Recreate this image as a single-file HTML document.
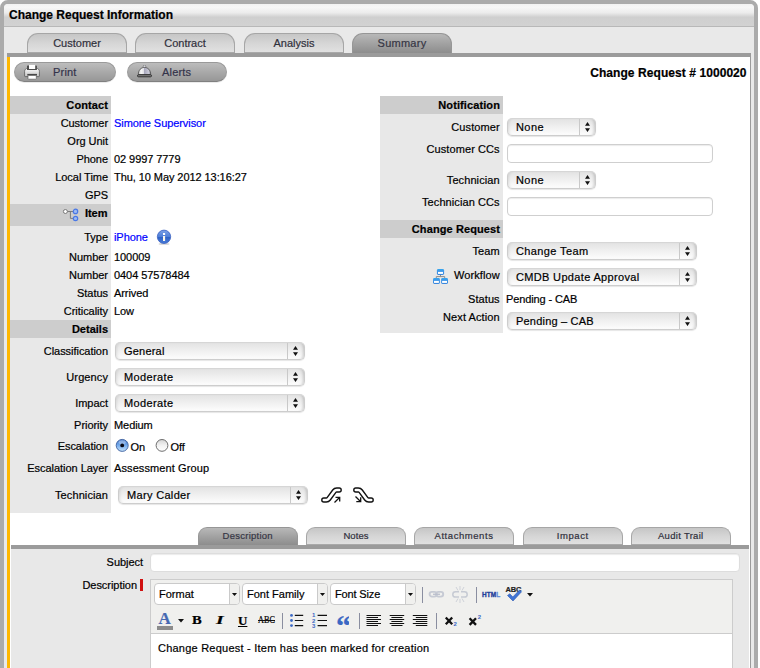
<!DOCTYPE html>
<html><head><meta charset="utf-8">
<style>
*{box-sizing:border-box;margin:0;padding:0}
html,body{width:760px;height:668px;overflow:hidden;background:#fff}
body{font-family:"Liberation Sans",sans-serif;font-size:11px;color:#000;position:relative;-webkit-text-stroke:.2px}
.abs{position:absolute}
#frame{position:absolute;left:0;top:0;width:758px;height:700px;border:4px solid #ababab;border-radius:8px 8px 0 0;background:#e9e9e9}
#hdr{position:absolute;left:4px;top:4px;width:750px;height:22px;background:linear-gradient(#f2f2f2 0%,#f7f7f7 15%,#ececec 40%,#dddddd 50%,#cfcfcf 60%,#d2d2d2 100%);border-radius:4px 4px 0 0}
#hdrline{position:absolute;left:4px;top:26px;width:750px;height:1px;background:#b8b8b8}
#title{position:absolute;left:9px;top:8px;font-weight:bold;font-size:12px;line-height:14px;color:#000}
.tab{position:absolute;height:20px;width:100px;border-radius:11px 11px 0 0;border:1px solid #a6a6a6;border-bottom:none;box-shadow:inset 0 -1px 0 #a9a9a9;background:linear-gradient(#c6c6c6,#d6d6d6 50%,#e2e2e2);text-align:center;font-size:11px;line-height:18px;color:#30303c;letter-spacing:0}
.tab.sel{background:linear-gradient(#b8b8b8,#a2a2a2 50%,#8d8d8d);color:#363644;border-color:#969696;box-shadow:none}
.tab.bt{top:527px;height:18px;width:99.500px;font-size:9.500px;line-height:16px;border-radius:9px 9px 0 0}
.bar{position:absolute;background:#9b9b9b}
#white{position:absolute;left:10px;top:57px;width:740px;height:620px;background:#fff}
#gp{position:absolute;left:11px;top:549px;width:738px;height:130px;background:#e8e8e8}
#yellow{position:absolute;left:7px;top:57px;width:3px;height:620px;background:#ffb700}
.btn{position:absolute;height:20px;width:101px;border-radius:10px;background:linear-gradient(#bdbdbd,#a9a9a9 50%,#979797);border:1px solid #9a9a9a;border-bottom-color:#808080;box-shadow:0 1px 0 rgba(0,0,0,.08);font-size:11px;line-height:18px;color:#33334a;letter-spacing:.2px}
.lblcol{position:absolute;background:#e8e8e8}
.sec{position:absolute;background:#cdcdcd;height:18px;font-weight:bold;text-align:right;line-height:18px;padding-right:3px}
.l{position:absolute;text-align:right;line-height:14px;white-space:nowrap;letter-spacing:-.04px}
.v{position:absolute;line-height:14px;white-space:nowrap;letter-spacing:-.07px}
.link{color:#0000ff}
.sel2{position:absolute;height:18px;border-radius:5px;border:1px solid #cdcdcd;border-top-color:#d6d6d6;background:linear-gradient(#e3e3e3,#f0f0f0 50%,#fdfdfd);box-shadow:inset -3px 0 3px -2px rgba(0,0,0,.18),inset 3px 0 3px -2px rgba(0,0,0,.10),0 1px 1px rgba(0,0,0,.10);font-size:11px;line-height:17px;padding-left:8px;letter-spacing:.2px;color:#000}
.sel2 i{position:absolute;right:15px;top:0;bottom:0;width:1px;background:#c9c9c9}
.sel2 svg{position:absolute;right:5px;top:3px}
.sel2[style*="--w"] i{right:16px}
.sel2[style*="--w"] svg{right:6px}
.sel2 b{position:absolute;right:4px;top:3px;width:7px;height:11px}
.inp{position:absolute;height:19px;border-radius:4px;border:1px solid #cfcfcf;background:#fff;box-shadow:inset 0 1px 1px rgba(0,0,0,.08)}
</style></head><body>
<div id="frame"></div>
<div id="hdr"></div><div id="hdrline"></div>
<div id="title">Change Request Information</div>

<div class="tab" style="left:27px;top:33px">Customer</div>
<div class="tab" style="left:135px;top:33px">Contract</div>
<div class="tab" style="left:244px;top:33px">Analysis</div>
<div class="tab sel" style="left:352px;top:33px;letter-spacing:.25px">Summary</div>
<div class="bar" style="left:7px;top:53px;width:744px;height:4px;box-shadow:0 1px 0 rgba(155,155,155,.45)"></div>
<div class="bar" style="left:750px;top:53px;width:1px;height:620px"></div>
<div id="white"></div><div id="gp"></div>
<div id="yellow"></div>

<div class="btn" style="left:14px;top:62px;width:101.500px"><svg class="abs" style="left:9px;top:1px" width="17" height="17" viewBox="0 0 17 17">
<defs><linearGradient id="pg" x1="0" y1="0" x2="0" y2="1"><stop offset="0" stop-color="#ffffff"/><stop offset=".35" stop-color="#e6e6e6"/><stop offset="1" stop-color="#c4c4c4"/></linearGradient></defs>
<path d="M.6 12V7.400C.6 5.600 1.900 4.600 3.200 4.300H12.800C14.100 4.600 15.400 5.600 15.400 7.400V12Q15.400 12.600 14.800 12.600H1.200Q.6 12.600 .6 12Z" fill="url(#pg)" stroke="#5a5a5a" stroke-width=".8"/>
<path d="M3 6V2.300Q3 1.600 3.700 1.600H12.200Q12.900 1.600 12.900 2.300V6Z" fill="#4c4c4c"/>
<rect x="5" y=".9" width="6.200" height="4.100" fill="#fff"/>
<rect x="3.300" y="9.900" width="9.700" height="1.700" fill="#484848"/>
<rect x="4" y="11.500" width="8.300" height="3.700" rx=".5" fill="#fff" stroke="#5e5e5e" stroke-width=".7"/>
</svg><span class="abs" style="left:38px;top:0">Print</span></div>
<div class="btn" style="left:127px;top:62px;width:100px"><svg class="abs" style="left:9px;top:2px" width="16" height="13" viewBox="0 0 16 13">
<defs><linearGradient id="bg" x1="0" y1="0" x2="1" y2="0"><stop offset="0" stop-color="#b8b8b8"/><stop offset=".22" stop-color="#f8f8f8"/><stop offset=".48" stop-color="#dcdce2"/><stop offset=".5" stop-color="#a9a9bd"/><stop offset=".85" stop-color="#c9c9d6"/><stop offset="1" stop-color="#8c8c98"/></linearGradient></defs>
<ellipse cx="7.500" cy="1.500" rx="1.250" ry="1.400" fill="#e4e4ea" stroke="#5a5a5a" stroke-width=".6"/>
<path d="M1.300 9.600C1.300 5 4.200 2.400 7.500 2.400S13.700 5 13.700 9.600Z" fill="url(#bg)" stroke="#4c4c4c" stroke-width=".8"/>
<rect x=".5" y="9.800" width="14" height="2" rx="1" fill="#8e8e8e" stroke="#222" stroke-width=".9"/>
</svg><span class="abs" style="left:34px;top:0">Alerts</span></div>
<div class="abs" style="right:13.400px;top:66px;font-weight:bold;font-size:12px;line-height:14px;letter-spacing:.07px">Change Request # 1000020</div>

<!-- left column -->
<div class="lblcol" style="left:10px;top:96px;width:101px;height:417px"></div>
<div class="sec" style="left:10px;top:96px;width:101px;letter-spacing:.1px">Contact</div>
<div class="sec" style="left:10px;top:204px;width:101px;height:22px;line-height:19px;padding-right:3.500px">Item</div>
<div class="sec" style="left:10px;top:320px;width:101px">Details</div>

<div class="l" style="right:652px;top:116px">Customer</div><div class="v link" style="left:114px;top:116px">Simone Supervisor</div>
<div class="l" style="right:652px;top:134px">Org Unit</div>
<div class="l" style="right:652px;top:152px">Phone</div><div class="v" style="left:114px;top:152px">02 9997 7779</div>
<div class="l" style="right:652px;top:170px">Local Time</div><div class="v" style="left:114px;top:170px">Thu, 10 May 2012 13:16:27</div>
<div class="l" style="right:652px;top:188px">GPS</div>
<div class="l" style="right:652px;top:230px">Type</div><div class="v link" style="left:114px;top:230px">iPhone</div>
<div class="l" style="right:652px;top:250px">Number</div><div class="v" style="left:114px;top:250px">100009</div>
<div class="l" style="right:652px;top:268px">Number</div><div class="v" style="left:114px;top:268px">0404 57578484</div>
<div class="l" style="right:652px;top:286px">Status</div><div class="v" style="left:114px;top:286px">Arrived</div>
<div class="l" style="right:652px;top:304px">Criticality</div><div class="v" style="left:114px;top:304px">Low</div>
<div class="l" style="right:652px;top:344px">Classification</div>
<div class="l" style="right:652px;top:370px;letter-spacing:.1px">Urgency</div>
<div class="l" style="right:652px;top:396px">Impact</div>
<div class="l" style="right:652px;top:418px">Priority</div><div class="v" style="left:114px;top:418px">Medium</div>
<div class="l" style="right:652px;top:439px">Escalation</div>
<div class="l" style="right:652px;top:461px">Escalation Layer</div><div class="v" style="left:114px;top:461px;letter-spacing:.1px">Assessment Group</div>
<div class="l" style="right:652px;top:488px;letter-spacing:.1px">Technician</div>

<div class="sel2" style="left:115px;top:342px;width:190px;--w:1">General<i></i><svg width="5" height="10" viewBox="0 0 5 10"><path d="M2.5 0L5 3.8H0zM2.5 10L5 6.2H0z" fill="#111"/></svg></div>
<div class="sel2" style="left:115px;top:368px;width:190px;--w:1;letter-spacing:.37px">Moderate<i></i><svg width="5" height="10" viewBox="0 0 5 10"><path d="M2.5 0L5 3.8H0zM2.5 10L5 6.2H0z" fill="#111"/></svg></div>
<div class="sel2" style="left:115px;top:394px;width:190px;--w:1;letter-spacing:.37px">Moderate<i></i><svg width="5" height="10" viewBox="0 0 5 10"><path d="M2.5 0L5 3.8H0zM2.5 10L5 6.2H0z" fill="#111"/></svg></div>
<div class="sel2" style="left:118px;top:486px;width:190px;--w:1;letter-spacing:.33px">Mary Calder<i></i><svg width="5" height="10" viewBox="0 0 5 10"><path d="M2.5 0L5 3.8H0zM2.5 10L5 6.2H0z" fill="#111"/></svg></div>


<svg class="abs" style="left:62px;top:208px" width="18" height="14" viewBox="0 0 18 14">
<path d="M5 3.500H11.500M8.400 3.500V10.400H11.500" fill="none" stroke="#7c7c7c" stroke-width="1"/>
<circle cx="3.400" cy="3.500" r="2" fill="#fff" stroke="#7a7a7a" stroke-width="1"/>
<circle cx="13.500" cy="3.400" r="2.200" fill="#9dbaf2" stroke="#4a78e6" stroke-width="1.200"/>
<circle cx="13.500" cy="10.500" r="2.200" fill="#9dbaf2" stroke="#4a78e6" stroke-width="1.200"/>
</svg>
<svg class="abs" style="left:156px;top:229px" width="16" height="17" viewBox="0 0 16 17">
<defs><linearGradient id="ig" x1="0" y1="0" x2="0" y2="1"><stop offset="0" stop-color="#7da2e6"/><stop offset=".48" stop-color="#4f7fd8"/><stop offset=".52" stop-color="#2f62c6"/><stop offset="1" stop-color="#4a7cd8"/></linearGradient></defs>
<ellipse cx="8" cy="14.900" rx="5.500" ry="1.200" fill="#000" opacity=".14"/>
<circle cx="8" cy="7.800" r="6.700" fill="url(#ig)" stroke="#2c55bc" stroke-width=".7"/>
<rect x="7" y="4" width="2.100" height="2" fill="#fff"/>
<rect x="7" y="7" width="2.100" height="5" fill="#fbf7ea"/>
</svg>

<svg class="abs" style="left:320px;top:486px" width="24" height="18" viewBox="0 0 24 18">
<path d="M3.800 14H6.300Q7.800 14 8.700 12.800L14.300 5.200Q15.200 4 16.700 4H19.200" fill="none" stroke="#111" stroke-width="5.400" stroke-linecap="round" stroke-linejoin="round"/>
<path d="M3.800 14H6.300Q7.800 14 8.700 12.800L14.300 5.200Q15.200 4 16.700 4H19.200" fill="none" stroke="#fff" stroke-width="2.600" stroke-linecap="round" stroke-linejoin="round"/>
<path d="M14.500 16.500L19.500 11.500M15.500 11.300H19.700V15.500" fill="none" stroke="#111" stroke-width="1.300"/>
</svg>
<svg class="abs" style="left:351px;top:486px" width="25" height="18" viewBox="0 0 25 18">
<path d="M4.800 4H7.300Q8.800 4 9.700 5.200L15.300 12.800Q16.200 14 17.700 14H20.200" fill="none" stroke="#111" stroke-width="5.400" stroke-linecap="round" stroke-linejoin="round"/>
<path d="M4.800 4H7.300Q8.800 4 9.700 5.200L15.300 12.800Q16.200 14 17.700 14H20.200" fill="none" stroke="#fff" stroke-width="2.600" stroke-linecap="round" stroke-linejoin="round"/>
<path d="M4.500 10.500L9.500 15.500M5.300 15.700H9.700V11.300" fill="none" stroke="#111" stroke-width="1.300"/>
</svg>
<svg class="abs" style="left:115px;top:438px" width="15" height="15" viewBox="0 0 15 15">
<defs><linearGradient id="rg" x1="0" y1="0" x2="0" y2="1"><stop offset="0" stop-color="#3a6fc4"/><stop offset=".45" stop-color="#6ea6ea"/><stop offset="1" stop-color="#c8e4fb"/></linearGradient></defs>
<circle cx="7.200" cy="7.400" r="6" fill="url(#rg)" stroke="#3b5f9e" stroke-width=".9"/>
<ellipse cx="7.200" cy="4.300" rx="3.600" ry="2" fill="#fff" opacity=".35"/>
<circle cx="7.200" cy="7.400" r="1.900" fill="#0a0a14"/>
</svg>
<svg class="abs" style="left:155px;top:438px" width="15" height="15" viewBox="0 0 15 15">
<defs><linearGradient id="rg2" x1="0" y1="0" x2="0" y2="1"><stop offset="0" stop-color="#d4d4d4"/><stop offset=".5" stop-color="#f2f2f2"/><stop offset="1" stop-color="#fff"/></linearGradient></defs>
<circle cx="7" cy="7.400" r="5.900" fill="url(#rg2)" stroke="#6e6e6e" stroke-width="1"/>
</svg>
<div class="v" style="left:130.500px;top:440px">On</div>
<div class="v" style="left:170.500px;top:440px">Off</div>

<!-- right column -->
<div class="lblcol" style="left:380px;top:96px;width:123px;height:237px"></div>
<div class="sec" style="left:380px;top:96px;width:123px;letter-spacing:.1px">Notification</div>
<div class="sec" style="left:380px;top:220px;width:123px;letter-spacing:.1px">Change Request</div>
<div class="l" style="letter-spacing:.09px;right:260.300px;top:120px">Customer</div>
<div class="l" style="letter-spacing:.09px;right:260.300px;top:142px">Customer CCs</div>
<div class="l" style="letter-spacing:.09px;right:260.300px;top:173px">Technician</div>
<div class="l" style="letter-spacing:.09px;right:260.300px;top:195px">Technician CCs</div>
<div class="l" style="letter-spacing:.09px;right:260.300px;top:244px">Team</div>
<div class="l" style="letter-spacing:.09px;right:260.300px;top:268px">Workflow</div>
<div class="l" style="letter-spacing:.09px;right:260.300px;top:292px">Status</div><div class="v" style="left:506px;top:292px;letter-spacing:-.12px">Pending - CAB</div>
<div class="l" style="letter-spacing:.09px;right:260.300px;top:310px">Next Action</div>
<div class="sel2" style="left:507px;top:118px;width:89px;letter-spacing:.42px">None<i></i><svg width="5" height="10" viewBox="0 0 5 10"><path d="M2.5 0L5 3.8H0zM2.5 10L5 6.2H0z" fill="#111"/></svg></div>
<div class="sel2" style="left:507px;top:171px;width:89px;letter-spacing:.42px">None<i></i><svg width="5" height="10" viewBox="0 0 5 10"><path d="M2.5 0L5 3.8H0zM2.5 10L5 6.2H0z" fill="#111"/></svg></div>
<div class="inp" style="left:507px;top:144px;width:206px"></div>
<div class="inp" style="left:507px;top:197px;width:206px"></div>
<div class="sel2" style="left:507px;top:242px;width:190px;--w:1;letter-spacing:.38px">Change Team<i></i><svg width="5" height="10" viewBox="0 0 5 10"><path d="M2.5 0L5 3.8H0zM2.5 10L5 6.2H0z" fill="#111"/></svg></div>
<div class="sel2" style="left:507px;top:268px;width:190px;--w:1;letter-spacing:.335px">CMDB Update Approval<i></i><svg width="5" height="10" viewBox="0 0 5 10"><path d="M2.5 0L5 3.8H0zM2.5 10L5 6.2H0z" fill="#111"/></svg></div>
<div class="sel2" style="left:507px;top:312px;width:190px;--w:1">Pending &#8211; CAB<i></i><svg width="5" height="10" viewBox="0 0 5 10"><path d="M2.5 0L5 3.8H0zM2.5 10L5 6.2H0z" fill="#111"/></svg></div>

<svg class="abs" style="left:432px;top:269px" width="17" height="16" viewBox="0 0 17 16">
<defs><linearGradient id="wg" x1="0" y1="0" x2="0" y2="1"><stop offset="0" stop-color="#35a6ee"/><stop offset=".3" stop-color="#3d98ea"/><stop offset="1" stop-color="#3c86dc"/></linearGradient></defs>
<path d="M8.500 6V7.600M4.300 9.200V7.600H12.700V9.200" fill="none" stroke="#8c8c8c" stroke-width="1"/>
<g fill="url(#wg)"><rect x="4.900" y=".1" width="7.200" height="5.900" rx="1.400"/><rect x="1" y="9.100" width="6.900" height="5.900" rx="1.400"/><rect x="9.100" y="9.100" width="6.900" height="5.900" rx="1.400"/></g>
<g fill="#fff"><rect x="6" y="2.900" width="5" height="2"/><rect x="2" y="11.900" width="4.900" height="2"/><rect x="10.100" y="11.900" width="4.900" height="2"/></g>
</svg>
<!-- bottom tabs -->
<div class="tab sel bt" style="left:198px;letter-spacing:.25px">Description</div>
<div class="tab bt" style="left:306px;width:100px;letter-spacing:.05px">Notes</div>
<div class="tab bt" style="left:414px;width:100px;letter-spacing:.56px">Attachments</div>
<div class="tab bt" style="left:523px;letter-spacing:.58px">Impact</div>
<div class="tab bt" style="left:631px;letter-spacing:.3px">Audit Trail</div>
<div class="bar" style="left:11px;top:545px;width:738px;height:4px"></div>

<div class="l" style="right:617px;top:555px">Subject</div>
<div class="inp" style="left:150px;top:553px;width:590px;border-color:#ddd"></div>
<div class="l" style="right:623px;top:578px">Description</div>
<div class="abs" style="left:140px;top:579px;width:3px;height:12px;background:#d01010"></div>

<div class="abs" id="ed" style="left:150px;top:579px;width:583px;height:100px;background:#f0f0ee;border:1px solid #ccc"></div>

<style>
.ms{position:absolute;top:583px;height:22px;width:86px;border:1px solid #cacaca;border-radius:4px;background:#fff;font-size:11px;line-height:20px;padding-left:4px;letter-spacing:0;overflow:hidden}
.ms u{position:absolute;right:0;top:0;bottom:0;width:10px;border-left:1px solid #cacaca;background:#f0f0ee}
.ms u:after{content:"";position:absolute;left:1.500px;top:8.500px;width:6px;height:3.500px;background:#111;clip-path:polygon(0 0,100% 0,50% 100%)}
.sep{position:absolute;width:1px;background:#8a8ea0}
.da{position:absolute;width:6px;height:3.500px;background:#111;clip-path:polygon(0 0,100% 0,50% 100%)}
.ser{position:absolute;font-family:"Liberation Serif",serif;color:#000;line-height:14px}
</style>
<div class="ms" style="left:154px">Format<u></u></div>
<div class="ms" style="left:242px">Font Family<u></u></div>
<div class="ms" style="left:330px;letter-spacing:-.15px">Font Size<u></u></div>
<div class="sep" style="left:422px;top:587px;height:16px"></div>
<svg class="abs" style="left:428px;top:589px" width="17" height="11" viewBox="0 0 17 11"><g fill="none" stroke="#c6cad4" stroke-width="1.900"><rect x="1.600" y="2.900" width="7" height="4.700" rx="2.350"/><rect x="8.200" y="2.900" width="7" height="4.700" rx="2.350"/></g><path d="M5 5.250H12" stroke="#b9becb" stroke-width="1.300"/></svg>
<svg class="abs" style="left:451px;top:585px" width="18" height="19" viewBox="0 0 18 19"><g fill="none" stroke="#c6cad3" stroke-width="1.500"><path d="M8 6.700H4.500a2.700 2.700 0 0 0 0 5.400H8M10 6.700H13.500a2.700 2.700 0 0 1 0 5.400H10"/></g><g stroke="#cfd2d9" stroke-width="1"><path d="M9 1V5M5 2L7 5.500M13 2L11 5.500M9 18V14M5 17L7 13.500M13 17L11 13.500"/></g></svg>
<div class="sep" style="left:476px;top:587px;height:16px"></div>
<div class="abs" style="left:481.500px;top:590px;font-size:7px;font-weight:bold;line-height:9px;color:#1f409a;-webkit-text-stroke:.35px #1f409a;letter-spacing:.1px;transform-origin:0 0;transform:scaleX(.92)">HTM<span style="color:#5f8ad8;-webkit-text-stroke:.35px #5f8ad8">L</span></div>
<div class="abs" style="left:505.500px;top:585.500px;font-size:7.500px;font-weight:bold;line-height:8px;color:#222;letter-spacing:-.2px">ABC</div>
<svg class="abs" style="left:506px;top:589px" width="17" height="13" viewBox="0 0 17 13"><path d="M1.500 6.500L3.800 4.800L6.800 8L13.500 1L15.500 2.800L7 12z" fill="#3f74d6" stroke="#2a55b0" stroke-width=".6"/></svg>
<div class="da" style="left:527px;top:593px"></div>

<div class="ser" style="left:158.600px;top:609.300px;font-size:17px;line-height:20px;color:#4669b2;font-weight:bold">A</div>
<div class="abs" style="left:157px;top:626px;width:16px;height:4px;background:#8c8c8c"></div>
<div class="da" style="left:178px;top:619px"></div>
<div class="ser" style="left:191.500px;top:613.200px;font-size:13.500px;font-weight:bold;transform:scaleX(1.08);transform-origin:0 0">B</div>
<div class="ser" style="left:215.500px;top:613.200px;font-size:13.500px;font-weight:bold;font-style:italic;transform:scaleX(1.45);transform-origin:0 0">I</div>
<div class="ser" style="left:238px;top:613.700px;font-size:13px;font-weight:bold;text-decoration:underline">U</div>
<div class="ser" style="left:258.300px;top:613px;font-size:10.500px;transform:scaleX(.78);transform-origin:0 0">ABC</div>
<div class="abs" style="left:257.500px;top:620.300px;width:17.500px;height:1px;background:#111"></div>
<div class="sep" style="left:282px;top:613px;height:16px"></div>
<svg class="abs" style="left:289px;top:613px" width="16" height="15" viewBox="0 0 16 15"><g fill="#3b68c4"><circle cx="2.500" cy="2.400" r="1.400"/><circle cx="2.500" cy="7.500" r="1.400"/><circle cx="2.500" cy="12.600" r="1.400"/></g><path d="M5.800 2.400H14.200M5.800 7.500H14.200M5.800 12.600H14.200" stroke="#111" stroke-width="1.100"/></svg>
<svg class="abs" style="left:312px;top:612px" width="16" height="17" viewBox="0 0 16 17"><g fill="#3b68c4" font-family="Liberation Sans" font-size="6" font-weight="bold"><text x="0" y="5.200">1</text><text x="0" y="10.700">2</text><text x="0" y="16.200">3</text></g><path d="M5.600 3.400H15M5.600 8.500H15M5.600 13.600H15" stroke="#111" stroke-width="1.100"/></svg>
<div class="ser" style="left:336px;top:611px;font-size:30px;line-height:30px;font-weight:bold;color:#3b68c4;height:16px;overflow:hidden;letter-spacing:-2.200px"><span style="position:relative;top:0px">&#8220;</span></div>
<div class="sep" style="left:359px;top:613px;height:16px"></div>
<svg class="abs" style="left:366px;top:614px" width="16" height="14" viewBox="0 0 16 14"><path d="M0.5 1.5H15M0.5 3.5H12M0.5 5.5H15M0.5 7.5H12M0.5 9.5H15M0.5 11.5H12" stroke="#111" stroke-width="1"/></svg>
<svg class="abs" style="left:389px;top:614px" width="16" height="14" viewBox="0 0 16 14"><path d="M0.7 1.5H15.2M2.4 3.5H13.5M0.7 5.5H15.2M2.4 7.5H13.5M0.7 9.5H15.2M2.4 11.5H13.5" stroke="#111" stroke-width="1"/></svg>
<svg class="abs" style="left:412px;top:614px" width="16" height="14" viewBox="0 0 16 14"><path d="M0.8 1.5H15.3M3.8 3.5H15.3M0.8 5.5H15.3M3.8 7.5H15.3M0.8 9.5H15.3M3.8 11.5H15.3" stroke="#111" stroke-width="1"/></svg>
<div class="sep" style="left:436px;top:613px;height:16px"></div>
<svg class="abs" style="left:444px;top:615px" width="15" height="13" viewBox="0 0 15 13"><path d="M1.800 2.500L8.200 9.200M8.200 2.500L1.800 9.200" stroke="#111" stroke-width="2.300"/><text x="9.500" y="11.300" font-family="Liberation Sans" font-weight="bold" font-size="6" fill="#3b68c4">2</text></svg>
<svg class="abs" style="left:468px;top:614px" width="15" height="13" viewBox="0 0 15 13"><path d="M1.600 4.200L8 10.900M8 4.200L1.600 10.900" stroke="#111" stroke-width="2.300"/><text x="9.800" y="5.200" font-family="Liberation Sans" font-weight="bold" font-size="6" fill="#3b68c4">2</text></svg>
<div class="abs" style="left:151px;top:633px;width:581px;height:40px;background:#fff;border-top:1px solid #ccc"></div>
<div class="abs" style="left:158px;top:641px;font-size:11px;line-height:14px;letter-spacing:.23px">Change Request - Item has been marked for creation</div>
</body></html>
